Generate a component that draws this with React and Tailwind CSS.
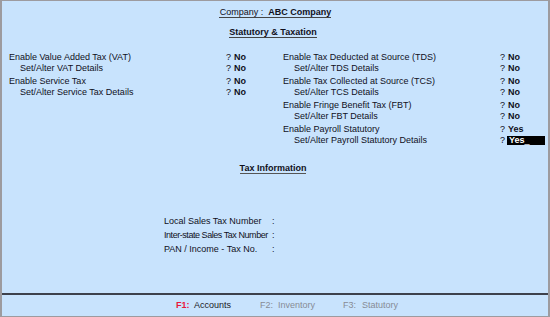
import React from 'react';

const left = [
  [
    ['Enable Value Added Tax (VAT)', 'No'],
    ['Set/Alter VAT Details', 'No', true],
  ],
  [
    ['Enable Service Tax', 'No'],
    ['Set/Alter Service Tax Details', 'No', true],
  ],
];

const right = [
  [
    ['Enable Tax Deducted at Source (TDS)', 'No'],
    ['Set/Alter TDS Details', 'No', true],
  ],
  [
    ['Enable Tax Collected at Source (TCS)', 'No'],
    ['Set/Alter TCS Details', 'No', true],
  ],
  [
    ['Enable Fringe Benefit Tax (FBT)', 'No'],
    ['Set/Alter FBT Details', 'No', true],
  ],
  [
    ['Enable Payroll Statutory', 'Yes'],
    ['Set/Alter Payroll Statutory Details', 'Yes', true, true],
  ],
];

const Row = ({ label, value, sub, active, labelW, qW }) => (
  <div className="flex h-[11px] items-center">
    <div className={`shrink-0 ${sub ? 'pl-[11px]' : ''}`} style={{ width: labelW }}>
      {label}
    </div>
    <div className="shrink-0" style={{ width: qW }}>?</div>
    {active ? (
      <div className="h-[9px] w-[38px] -ml-[1px] bg-black text-white font-bold flex items-center pl-[2px] leading-[9px]">
        Yes<span className="font-normal">_</span>
      </div>
    ) : (
      <div className="font-bold">{value}</div>
    )}
  </div>
);

const Column = ({ groups, labelW, qW, className }) => (
  <div className={`flex flex-col gap-[2px] ${className}`}>
    {groups.map((g, i) => (
      <div key={i} className="flex flex-col">
        {g.map(([label, value, sub, active]) => (
          <Row key={label} label={label} value={value} sub={sub} active={active} labelW={labelW} qW={qW} />
        ))}
      </div>
    ))}
  </div>
);

export default function App() {
  return (
    <div className="w-[550px] h-[317px] flex flex-col bg-[#c8e3fd] border-l-2 border-r-2 border-t border-b border-[#9d9b9f] text-[9px] leading-[11px] text-[#10101c] font-['Liberation_Sans',Arial,sans-serif] overflow-hidden">
      <div className="flex-1 flex flex-col">
        <div className="mt-[6px] flex justify-center">
          <div className="h-[11px] border-b border-[#444] leading-[10px] pl-[1px]">
            Company :&nbsp; <span className="font-bold">ABC Company</span>
          </div>
        </div>
        <div className="mt-[9px] flex justify-center pr-[4px]">
          <div className="h-[11px] border-b border-[#444] leading-[10px] font-bold">Statutory &amp; Taxation</div>
        </div>

        <div className="mt-[14px] flex">
          <Column groups={left} labelW={217} qW={8} className="ml-[7px] w-[267px]" />
          <Column groups={right} labelW={217} qW={8} className="ml-[7px]" />
        </div>

        <div className="mt-[17px] flex justify-center pr-[4px]">
          <div className="h-[11px] border-b-[1.5px] border-[#555] leading-[10px] font-bold">Tax Information</div>
        </div>

        <div className="mt-[42px] ml-[162px] flex flex-col gap-[3px]">
          <div className="flex h-[11px]">
            <div className="w-[108px]">Local Sales Tax Number</div>
            <div>:</div>
          </div>
          <div className="flex h-[11px]">
            <div className="w-[108px] tracking-[-0.45px]">Inter-state Sales Tax Number</div>
            <div>:</div>
          </div>
          <div className="flex h-[11px]">
            <div className="w-[108px]">PAN / Income - Tax No.</div>
            <div>:</div>
          </div>
        </div>
      </div>

      <div className="h-[2px] bg-[#3d414c]" />
      <div className="h-[21px] flex items-center pl-[174px]">
        <div className="w-[84px] flex">
          <span className="w-[18px] font-bold text-[#e8173c]">F1:</span>
          <span className="text-[#1a1a26]">Accounts</span>
        </div>
        <div className="w-[83px] flex text-[#878b95]">
          <span className="w-[18px]">F2:</span>
          <span>Inventory</span>
        </div>
        <div className="flex text-[#878b95]">
          <span className="w-[19px]">F3:</span>
          <span>Statutory</span>
        </div>
      </div>
    </div>
  );
}
